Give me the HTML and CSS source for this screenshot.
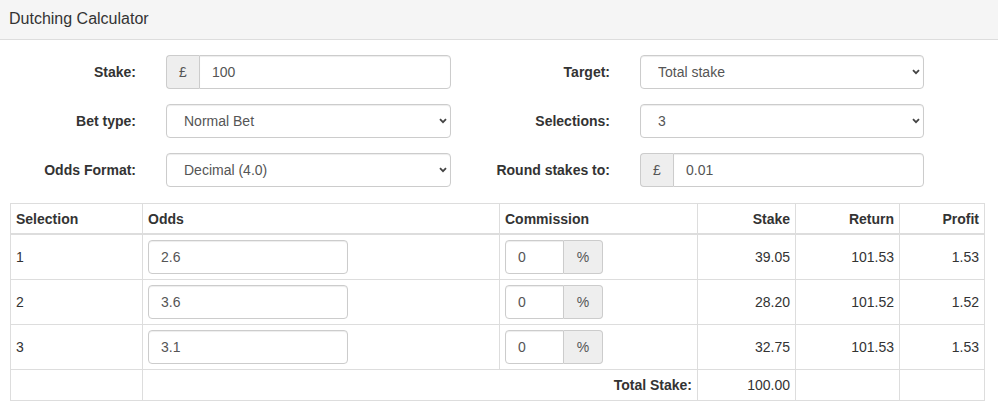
FILE: index.html
```html
<!DOCTYPE html>
<html>
<head>
    <title>Dutching Calculator</title>
    <link rel="stylesheet" href="styles.css">
</head>
<body>
    <div class="panel">
        <div class="panel-heading">Dutching Calculator</div>

        <form class="settings">
            <label class="control-label" for="stake">Stake:</label>
            <div class="input-group">
                <span class="addon">£</span>
                <input type="text" id="stake" class="form-control" value="100">
            </div>

            <label class="control-label" for="target">Target:</label>
            <div class="select-wrap">
                <select id="target" class="form-control">
                    <option>Total stake</option>
                    <option>Profit</option>
                </select>
                <svg class="caret" width="8" height="6" viewBox="0 0 8 6"><path d="M1 1.2 L4 4.2 L7 1.2" fill="none" stroke="#444" stroke-width="1.8"/></svg>
            </div>

            <label class="control-label" for="betType">Bet type:</label>
            <div class="select-wrap">
                <select id="betType" class="form-control">
                    <option>Normal Bet</option>
                    <option>Each Way</option>
                </select>
                <svg class="caret" width="8" height="6" viewBox="0 0 8 6"><path d="M1 1.2 L4 4.2 L7 1.2" fill="none" stroke="#444" stroke-width="1.8"/></svg>
            </div>

            <label class="control-label" for="selections">Selections:</label>
            <div class="select-wrap">
                <select id="selections" class="form-control">
                    <option>2</option>
                    <option selected>3</option>
                    <option>4</option>
                </select>
                <svg class="caret" width="8" height="6" viewBox="0 0 8 6"><path d="M1 1.2 L4 4.2 L7 1.2" fill="none" stroke="#444" stroke-width="1.8"/></svg>
            </div>

            <label class="control-label" for="oddsFormat">Odds Format:</label>
            <div class="select-wrap">
                <select id="oddsFormat" class="form-control">
                    <option>Decimal (4.0)</option>
                    <option>Fractional (3/1)</option>
                </select>
                <svg class="caret" width="8" height="6" viewBox="0 0 8 6"><path d="M1 1.2 L4 4.2 L7 1.2" fill="none" stroke="#444" stroke-width="1.8"/></svg>
            </div>

            <label class="control-label" for="round">Round stakes to:</label>
            <div class="input-group">
                <span class="addon">£</span>
                <input type="text" id="round" class="form-control" value="0.01">
            </div>
        </form>

        <table class="results">
            <colgroup>
                <col style="width: 132px">
                <col style="width: 357px">
                <col style="width: 198px">
                <col style="width: 98px">
                <col style="width: 104px">
                <col style="width: 85px">
            </colgroup>
            <thead>
                <tr>
                    <th>Selection</th>
                    <th>Odds</th>
                    <th>Commission</th>
                    <th class="num">Stake</th>
                    <th class="num">Return</th>
                    <th class="num">Profit</th>
                </tr>
            </thead>
            <tbody>
                <tr>
                    <td>1</td>
                    <td><input type="text" class="form-control odds" value="2.6"></td>
                    <td>
                        <div class="input-group commission">
                            <input type="text" class="form-control" value="0">
                            <span class="addon">%</span>
                        </div>
                    </td>
                    <td class="num">39.05</td>
                    <td class="num">101.53</td>
                    <td class="num">1.53</td>
                </tr>
                <tr>
                    <td>2</td>
                    <td><input type="text" class="form-control odds" value="3.6"></td>
                    <td>
                        <div class="input-group commission">
                            <input type="text" class="form-control" value="0">
                            <span class="addon">%</span>
                        </div>
                    </td>
                    <td class="num">28.20</td>
                    <td class="num">101.52</td>
                    <td class="num">1.52</td>
                </tr>
                <tr>
                    <td>3</td>
                    <td><input type="text" class="form-control odds" value="3.1"></td>
                    <td>
                        <div class="input-group commission">
                            <input type="text" class="form-control" value="0">
                            <span class="addon">%</span>
                        </div>
                    </td>
                    <td class="num">32.75</td>
                    <td class="num">101.53</td>
                    <td class="num">1.53</td>
                </tr>
            </tbody>
            <tfoot>
                <tr>
                    <td></td>
                    <th colspan="2" class="num">Total Stake:</th>
                    <td class="num">100.00</td>
                    <td></td>
                    <td></td>
                </tr>
            </tfoot>
        </table>
    </div>
</body>
</html>
```

FILE: styles.css
```css
body {
    font-family: "Liberation Sans", Arial, sans-serif;
    font-size: 14px;
    line-height: 20px;
    color: #333;
    background-color: #fff;
    margin: 0;
    padding: 0;
}

.panel-heading {
    background-color: #f5f5f5;
    border-bottom: 1px solid #ddd;
    font-size: 16px;
    padding: 9px 9px 10px 9px;
}

.settings {
    display: grid;
    grid-template-columns: 136px 285px 129px 284px;
    grid-auto-rows: 34px;
    column-gap: 30px;
    row-gap: 15px;
    margin-top: 15px;
}

.control-label {
    font-weight: bold;
    text-align: right;
    align-self: center;
}

.form-control {
    display: block;
    width: 100%;
    height: 34px;
    padding: 6px 12px;
    font-family: inherit;
    font-size: 14px;
    color: #555;
    background-color: #fff;
    border: 1px solid #ccc;
    border-radius: 4px;
    box-shadow: inset 0 1px 1px rgba(0, 0, 0, 0.075);
    box-sizing: border-box;
    outline: none;
}

.select-wrap {
    position: relative;
}

select.form-control {
    appearance: none;
    -webkit-appearance: none;
    padding-left: 17px;
}

.caret {
    position: absolute;
    right: 4px;
    top: 14px;
    pointer-events: none;
}

.input-group {
    display: flex;
}

.input-group .form-control {
    flex: 1;
    min-width: 0;
}

.addon {
    display: flex;
    align-items: center;
    justify-content: center;
    width: 33px;
    height: 34px;
    box-sizing: border-box;
    background-color: #eee;
    border: 1px solid #ccc;
    border-radius: 4px 0 0 4px;
    border-right: none;
    color: #555;
    flex-shrink: 0;
}

.input-group .addon + .form-control {
    border-radius: 0 4px 4px 0;
}

.commission {
    width: 98px;
}

.commission .form-control {
    border-radius: 4px 0 0 4px;
}

.commission .addon {
    width: 39px;
    border-right: 1px solid #ccc;
    border-left: none;
    border-radius: 0 4px 4px 0;
}

.results {
    table-layout: fixed;
    width: 975px;
    margin: 16px 0 0 10px;
    border-collapse: collapse;
    border: 1px solid #ddd;
}

.results th,
.results td {
    padding: 5px;
    border: 1px solid #ddd;
    text-align: left;
    vertical-align: middle;
}

.results thead th {
    padding-bottom: 4px;
    border-bottom: 2px solid #ddd;
}

.results .num {
    text-align: right;
}

.odds {
    width: 200px;
}
```
